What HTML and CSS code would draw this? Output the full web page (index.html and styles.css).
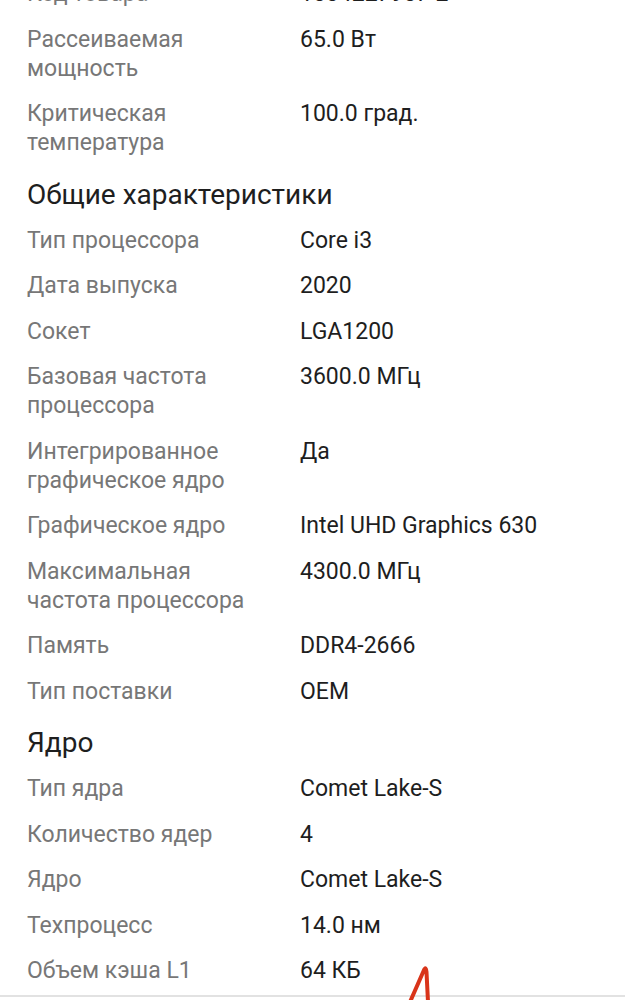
FILE: index.html
```html
<!DOCTYPE html>
<html lang="ru">
<head>
<meta charset="utf-8">
<link rel="stylesheet" href="styles.css">
</head>
<body>
<div class="page">
  <div class="specs">
    <div class="row"><div class="label">Код товара</div><div class="value">1004227907-2</div></div>
    <div class="row"><div class="label">Рассеиваемая мощность</div><div class="value">65.0 Вт</div></div>
    <div class="row"><div class="label">Критическая температура</div><div class="value">100.0 град.</div></div>

    <h2 class="section">Общие характеристики</h2>
    <div class="row"><div class="label">Тип процессора</div><div class="value">Core i3</div></div>
    <div class="row"><div class="label">Дата выпуска</div><div class="value">2020</div></div>
    <div class="row"><div class="label">Сокет</div><div class="value">LGA1200</div></div>
    <div class="row"><div class="label">Базовая частота процессора</div><div class="value">3600.0 МГц</div></div>
    <div class="row"><div class="label">Интегрированное графическое ядро</div><div class="value">Да</div></div>
    <div class="row"><div class="label">Графическое ядро</div><div class="value">Intel UHD Graphics 630</div></div>
    <div class="row"><div class="label">Максимальная частота процессора</div><div class="value">4300.0 МГц</div></div>
    <div class="row"><div class="label">Память</div><div class="value">DDR4-2666</div></div>
    <div class="row"><div class="label">Тип поставки</div><div class="value">OEM</div></div>

    <h2 class="section">Ядро</h2>
    <div class="row"><div class="label">Тип ядра</div><div class="value">Comet Lake-S</div></div>
    <div class="row"><div class="label">Количество ядер</div><div class="value">4</div></div>
    <div class="row"><div class="label">Ядро</div><div class="value">Comet Lake-S</div></div>
    <div class="row"><div class="label">Техпроцесс</div><div class="value">14.0 нм</div></div>
    <div class="row"><div class="label">Объем кэша L1</div><div class="value">64 КБ</div></div>
  </div>
  <div class="divider"></div>
</div>
<svg class="mark" width="625" height="1000" viewBox="0 0 625 1000">
  <path d="M410 1002 L424 970 Q426 966 426.5 972 L428 1002" fill="none" stroke="#d9341a" stroke-width="4" stroke-linecap="round" stroke-linejoin="round"/>
</svg>
</body>
</html>
```

FILE: styles.css
```css
html, body {
  margin: 0;
  padding: 0;
  background: #ffffff;
}
body {
  width: 625px;
  height: 1000px;
  overflow: hidden;
  position: relative;
  font-family: Roboto, "Noto Sans", sans-serif;
}
.page {
  margin-top: -29px;
}
.specs {
  padding: 0 20px 0 27px;
}
.row {
  display: grid;
  grid-template-columns: 273px 1fr;
  padding: 8.25px 0;
  font-size: 23px;
  line-height: 29px;
}
.label {
  color: #777777;
  padding-right: 20px;
}
.value {
  color: #1e1e1e;
}
.section {
  margin: 13px 0 7px;
  font-size: 28px;
  line-height: 32px;
  font-weight: 400;
  color: #1e1e1e;
}
.divider {
  height: 2px;
  background: #e2e2e2;
  margin-top: 1px;
}
.mark {
  position: absolute;
  left: 0;
  top: 0;
  pointer-events: none;
}
```
